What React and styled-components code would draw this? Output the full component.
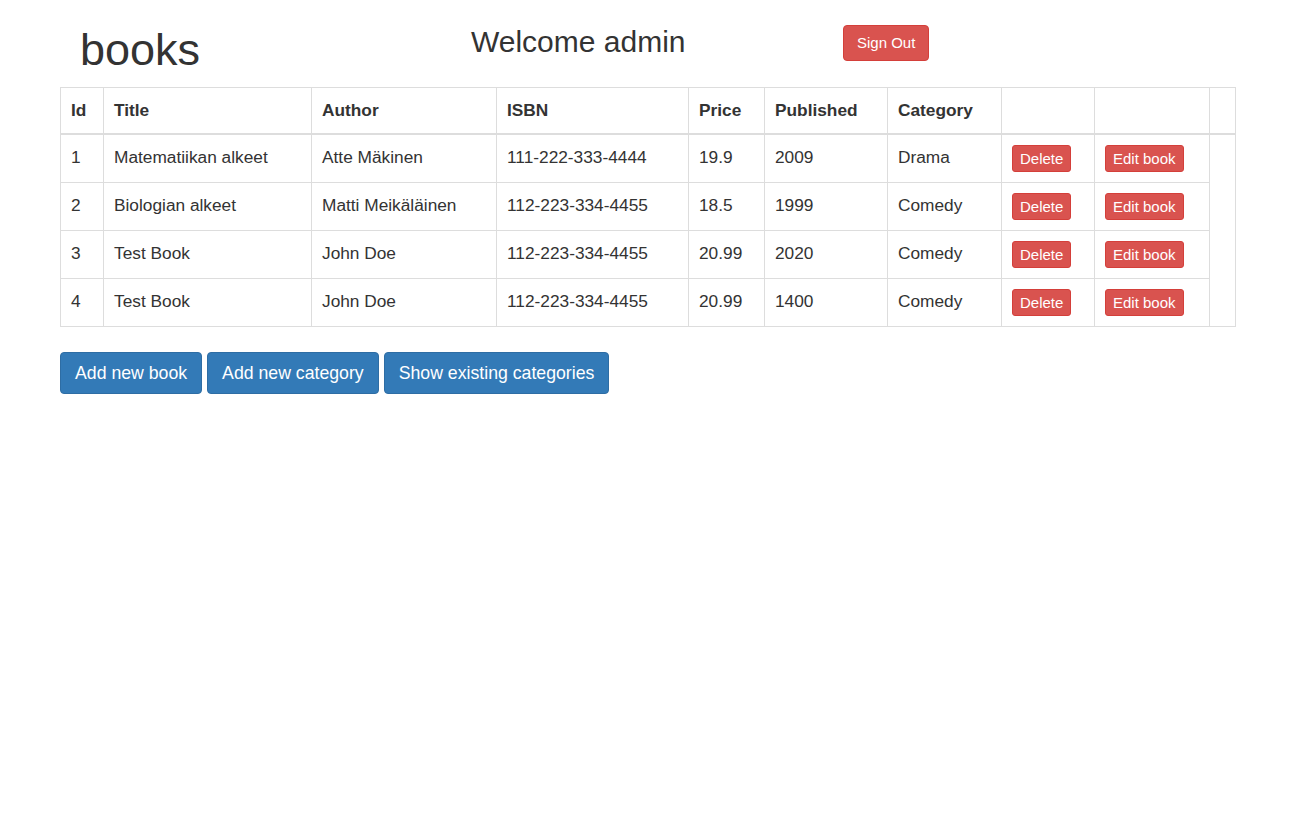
import React from "react";
import styled, { createGlobalStyle } from "styled-components";

const GlobalStyle = createGlobalStyle`
  * {
    box-sizing: border-box;
  }

  body {
    margin: 0;
    background: #ffffff;
    color: #333333;
    font-family: "Liberation Sans", Arial, Helvetica, sans-serif;
    font-size: 17px;
  }
`;

const Page = styled.div`
  padding: 25px 60px 0 60px;
`;

const Header = styled.header`
  display: flex;
  align-items: flex-start;
  height: 62px;
  padding-left: 20px;
`;

const Brand = styled.h1`
  width: 391px;
  margin: 0;
  font-size: 45px;
  font-weight: 400;
  line-height: 1.1;
`;

const Welcome = styled.h2`
  width: 372px;
  margin: 0;
  font-size: 30px;
  font-weight: 400;
  line-height: 1.1;
`;

const Button = styled.button`
  display: inline-block;
  margin: 0;
  font-family: inherit;
  font-weight: 400;
  color: #ffffff;
  text-align: center;
  white-space: nowrap;
  cursor: pointer;
  border: 1px solid;
  background-color: ${(p) => (p.$variant === "primary" ? "#337ab7" : "#d9534f")};
  border-color: ${(p) => (p.$variant === "primary" ? "#2e6da4" : "#d43f3a")};
  font-size: ${(p) => (p.$size === "lg" ? "17.7px" : "15px")};
  line-height: ${(p) => (p.$size === "lg" ? "24px" : p.$size === "sm" ? "23px" : "22px")};
  padding: ${(p) =>
    p.$size === "lg" ? "8px 14px" : p.$size === "sm" ? "1px 7px" : "6px 13px"};
  border-radius: ${(p) => (p.$size === "sm" ? "3px" : "4px")};
`;

const Table = styled.table`
  width: 1175px;
  table-layout: fixed;
  border-collapse: collapse;
  border: 1px solid #dddddd;
  font-size: 17.3px;
`;

const Th = styled.th`
  padding: 10px 10px 11px;
  text-align: left;
  font-weight: 700;
  line-height: 24px;
  vertical-align: bottom;
  border: 1px solid #dddddd;
  border-bottom-width: 2px;
`;

const Td = styled.td`
  padding: 10px;
  line-height: 24px;
  vertical-align: top;
  border: 1px solid #dddddd;
  white-space: nowrap;
`;

const Actions = styled.div`
  display: flex;
  gap: 5px;
  margin-top: 25px;
`;

const widths = [43, 208, 185, 192, 76, 123, 114, 93, 115, 26];
const headings = ["Id", "Title", "Author", "ISBN", "Price", "Published", "Category", "", "", ""];

const books = [
  { id: 1, title: "Matematiikan alkeet", author: "Atte Mäkinen", isbn: "111-222-333-4444", price: "19.9", year: 2009, category: "Drama" },
  { id: 2, title: "Biologian alkeet", author: "Matti Meikäläinen", isbn: "112-223-334-4455", price: "18.5", year: 1999, category: "Comedy" },
  { id: 3, title: "Test Book", author: "John Doe", isbn: "112-223-334-4455", price: "20.99", year: 2020, category: "Comedy" },
  { id: 4, title: "Test Book", author: "John Doe", isbn: "112-223-334-4455", price: "20.99", year: 1400, category: "Comedy" },
];

const App = () => {
  return (
    <>
      <GlobalStyle />
      <Page>
        <Header>
          <Brand>books</Brand>
          <Welcome>Welcome admin</Welcome>
          <Button>Sign Out</Button>
        </Header>

        <Table>
          <colgroup>
            {widths.map((w, i) => (
              <col key={i} style={{ width: w }} />
            ))}
          </colgroup>
          <thead>
            <tr>
              {headings.map((h, i) => (
                <Th key={i}>{h}</Th>
              ))}
            </tr>
          </thead>
          <tbody>
            {books.map((b) => (
              <tr key={b.id}>
                <Td>{b.id}</Td>
                <Td>{b.title}</Td>
                <Td>{b.author}</Td>
                <Td>{b.isbn}</Td>
                <Td>{b.price}</Td>
                <Td>{b.year}</Td>
                <Td>{b.category}</Td>
                <Td>
                  <Button $size="sm">Delete</Button>
                </Td>
                <Td>
                  <Button $size="sm">Edit book</Button>
                </Td>
              </tr>
            ))}
          </tbody>
        </Table>

        <Actions>
          <Button $variant="primary" $size="lg">Add new book</Button>
          <Button $variant="primary" $size="lg">Add new category</Button>
          <Button $variant="primary" $size="lg">Show existing categories</Button>
        </Actions>
      </Page>
    </>
  );
};

export default App;
